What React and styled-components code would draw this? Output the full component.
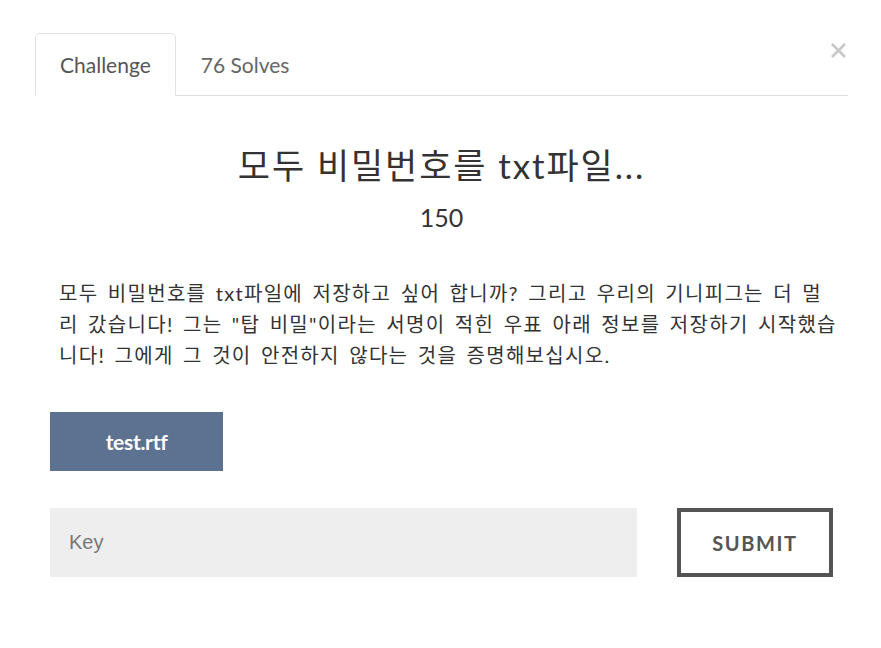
import React from "react";
import styled, { createGlobalStyle } from "styled-components";

const Global = createGlobalStyle`
  html, body { margin: 0; padding: 0; background: #fff; }
  body { font-family: Lato, "Noto Sans CJK KR", sans-serif; color: #333; }
  * { box-sizing: border-box; }
`;

const Modal = styled.div`
  width: 881px;
  padding: 33px 33px 0 35px;
`;

const Header = styled.div`
  position: relative;
`;

const Tabs = styled.ul`
  display: flex;
  list-style: none;
  margin: 0;
  padding: 0;
  border-bottom: 1px solid #dee2e6;
  width: 813px;
`;

const Tab = styled.li`
  height: 63px;
  margin-bottom: -1px;
  padding: 0 24px;
  display: flex;
  align-items: center;
  font-size: 21px;
  color: ${(p) => (p.$active ? "#555" : "#666")};
  background: ${(p) => (p.$active ? "#fff" : "transparent")};
  border: 1px solid ${(p) => (p.$active ? "#dee2e6" : "transparent")};
  border-bottom-color: ${(p) => (p.$active ? "#fff" : "transparent")};
  border-radius: 5px 5px 0 0;
`;

const Close = styled.button`
  position: absolute;
  right: 0;
  top: 7px;
  width: 20px;
  height: 20px;
  padding: 0;
  border: 0;
  background: none;
  display: flex;
  align-items: center;
  justify-content: center;
`;

const Body = styled.div`
  padding: 0 15px;
`;

const Title = styled.h3`
  margin: 47px 0 0;
  text-align: center;
  font-weight: 400;
  font-size: 35px;
  letter-spacing: 1.9px;
  line-height: 44px;
  color: #333;
`;

const Value = styled.h4`
  margin: 14px 0 0;
  text-align: center;
  font-weight: 400;
  font-size: 25px;
  line-height: 32px;
  color: #333;
`;

const Description = styled.p`
  margin: 45px 0 0;
  padding: 0 9px;
  font-size: 20px;
  letter-spacing: 1.3px;
  word-spacing: 3px;
  line-height: 31px;
  color: #333;
  width: 812px;
`;

const FileButton = styled.a`
  margin-top: 41px;
  display: flex;
  align-items: center;
  justify-content: center;
  width: 173px;
  height: 59px;
  background: #5c7290;
  color: #fff;
  font-weight: 700;
  font-size: 21px;
  text-decoration: none;
  letter-spacing: -0.3px;
`;

const SubmitRow = styled.div`
  margin-top: 37px;
  display: flex;
  align-items: stretch;
  gap: 40px;
  width: 783px;
`;

const KeyInput = styled.input`
  flex: 0 0 587px;
  height: 69px;
  border: 0;
  background: #eeeeee;
  padding: 0 19px;
  font-family: "Liberation Sans", Arial, sans-serif;
  font-size: 20px;
  color: #333;
  outline: none;
  &::placeholder { color: #777; }
`;

const SubmitButton = styled.button`
  flex: 0 0 156px;
  height: 69px;
  background: #fff;
  border: 4px solid #545454;
  font-family: Lato, sans-serif;
  font-weight: 700;
  font-size: 20px;
  letter-spacing: 1.6px;
  color: #555;
  padding: 0;
`;

export default function App() {
  return (
    <>
      <Global />
      <Modal>
        <Header>
          <Tabs>
            <Tab $active>Challenge</Tab>
            <Tab>76 Solves</Tab>
          </Tabs>
          <Close aria-label="Close">
            <svg width="17" height="17" viewBox="0 0 17 17">
              <path d="M2 2 L15 15 M15 2 L2 15" stroke="#c8c8c8" strokeWidth="2.6" />
            </svg>
          </Close>
        </Header>
        <Body>
          <Title>모두 비밀번호를 txt파일...</Title>
          <Value>150</Value>
          <Description>
            모두 비밀번호를 txt파일에 저장하고 싶어 합니까? 그리고 우리의 기니피그는 더 멀
            <br />
            리 갔습니다! 그는 "탑 비밀"이라는 서명이 적힌 우표 아래 정보를 저장하기 시작했습
            <br />
            니다! 그에게 그 것이 안전하지 않다는 것을 증명해보십시오.
          </Description>
          <FileButton>test.rtf</FileButton>
          <SubmitRow>
            <KeyInput placeholder="Key" />
            <SubmitButton>SUBMIT</SubmitButton>
          </SubmitRow>
        </Body>
      </Modal>
    </>
  );
}
